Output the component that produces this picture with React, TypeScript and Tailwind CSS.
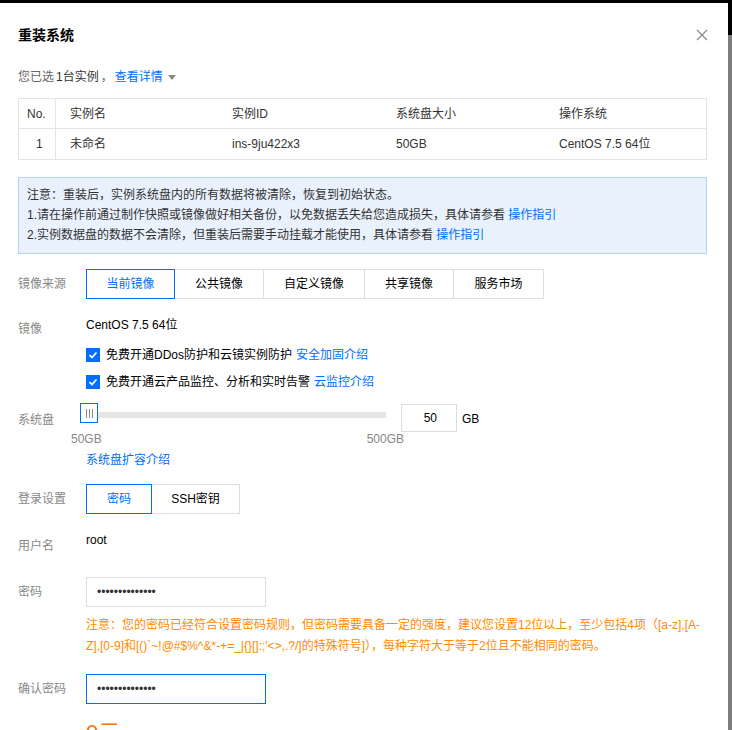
import React from "react";

const font = { fontFamily: '"Liberation Sans", "Noto Sans CJK SC", sans-serif' };

function Label({ children, className = "" }: { children: React.ReactNode; className?: string }) {
  return <div className={`w-[68px] shrink-0 text-[12px] text-[#888] ${className}`}>{children}</div>;
}

function Check() {
  return (
    <span className="flex h-[14px] w-[14px] items-center justify-center bg-[#006eff]">
      <svg width="10" height="10" viewBox="0 0 10 10">
        <path d="M1.5 5.2 L4 7.5 L8.5 2.5" fill="none" stroke="white" strokeWidth="1.8" />
      </svg>
    </span>
  );
}

const warning =
  "注意：您的密码已经符合设置密码规则，但密码需要具备一定的强度，建议您设置12位以上，至少包括4项（[a-z],[A-Z],[0-9]和[()`~!@#$%^&*-+=_|{}[]:;'<>,.?/]的特殊符号]），每种字符大于等于2位且不能相同的密码。";

export default function App() {
  const sources = [
    { name: "当前镜像", w: "w-[89px]" },
    { name: "公共镜像", w: "w-[89px]" },
    { name: "自定义镜像", w: "w-[101px]" },
    { name: "共享镜像", w: "w-[89px]" },
    { name: "服务市场", w: "w-[90px]" },
  ];
  const cols = [
    { h: "实例名", v: "未命名", w: "w-[162px]" },
    { h: "实例ID", v: "ins-9ju422x3", w: "w-[164px]" },
    { h: "系统盘大小", v: "50GB", w: "w-[163px]" },
    { h: "操作系统", v: "CentOS 7.5 64位", w: "flex-1" },
  ];

  return (
    <div className="flex h-[730px] w-[732px] overflow-hidden bg-black" style={font}>
      <div className="mt-[3px] flex w-[728px] flex-col bg-white pl-[18px] pr-[21px] text-[12px] text-[#333]">
        {/* header */}
        <div className="mt-[22px] flex h-[20px] items-center justify-between">
          <h1 className="text-[14px] font-bold text-black">重装系统</h1>
          <svg width="12" height="12" viewBox="0 0 12 12" className="mr-[-1px]">
            <path d="M1 1 L11 11 M11 1 L1 11" stroke="#888" strokeWidth="1.2" />
          </svg>
        </div>

        <div className="mt-[23px] flex h-[18px] items-center text-[#666]">
          您已选 <span className="mx-[2px] text-[#333]">1台实例</span>，
          <span className="ml-[2px] text-[#006eff]">查看详情</span>
          <svg width="8" height="5" viewBox="0 0 8 5" className="ml-[5px]">
            <path d="M0 0 H8 L4 5 Z" fill="#888" />
          </svg>
        </div>

        {/* table */}
        <div className="mt-[12px] border border-[#e5e5e5]">
          <div className="flex h-[30px] items-center border-b border-[#e5e5e5]">
            <div className="flex h-full w-[37px] items-center border-r border-[#e5e5e5] pl-[8px]">No.</div>
            {cols.map((c) => (
              <div key={c.h} className={`${c.w} pl-[14px]`}>{c.h}</div>
            ))}
          </div>
          <div className="flex h-[30px] items-center">
            <div className="flex h-full w-[37px] items-center border-r border-[#e5e5e5] pl-[17px]">1</div>
            {cols.map((c) => (
              <div key={c.h} className={`${c.w} pl-[14px]`}>{c.v}</div>
            ))}
          </div>
        </div>

        {/* notice */}
        <div className="mt-[17px] border border-[#b4d3f5] bg-[#e8f1fc] pb-[8px] pl-[8px] pt-[7px] leading-[20px] text-[#333]">
          <p>注意：重装后，实例系统盘内的所有数据将被清除，恢复到初始状态。</p>
          <p>
            1.请在操作前通过制作快照或镜像做好相关备份，以免数据丢失给您造成损失，具体请参看{" "}
            <span className="text-[#006eff]">操作指引</span>
          </p>
          <p>
            2.实例数据盘的数据不会清除，但重装后需要手动挂载才能使用，具体请参看{" "}
            <span className="text-[#006eff]">操作指引</span>
          </p>
        </div>

        {/* image source */}
        <div className="mt-[15px] flex items-center">
          <Label>镜像来源</Label>
          <div className="flex h-[30px]">
            {sources.map((s, i) => (
              <div
                key={s.name}
                className={`${s.w} flex items-center justify-center ${
                  i === 0
                    ? "border border-[#006eff] text-[#006eff]"
                    : "border-y border-r border-[#ddd] text-black"
                }`}
              >
                {s.name}
              </div>
            ))}
          </div>
        </div>

        {/* image */}
        <div className="mt-[17px] flex">
          <Label className="mt-[4px]">镜像</Label>
          <div className="flex flex-col">
            <div className="h-[18px] leading-[18px] text-black">CentOS 7.5 64位</div>
            <div className="mt-[13px] flex h-[16px] items-center">
              <Check />
              <span className="ml-[6px] text-black">免费开通DDos防护和云镜实例防护</span>
              <span className="ml-[4px] text-[#006eff]">安全加固介绍</span>
            </div>
            <div className="mt-[11px] flex h-[16px] items-center">
              <Check />
              <span className="ml-[6px] text-black">免费开通云产品监控、分析和实时告警</span>
              <span className="ml-[4px] text-[#006eff]">云监控介绍</span>
            </div>
          </div>
        </div>

        {/* system disk */}
        <div className="mt-[13px] flex">
          <Label className="mt-[8px]">系统盘</Label>
          <div className="flex flex-col">
            <div className="ml-[-6px] flex items-start">
              <div className="flex items-center">
                <div className="flex h-[20px] w-[18px] items-center justify-center gap-[2px] border border-[#006eff] bg-white">
                  <span className="h-[9px] w-px bg-[#888]" />
                  <span className="h-[9px] w-px bg-[#888]" />
                  <span className="h-[9px] w-px bg-[#888]" />
                </div>
                <div className="mt-[4px] h-[6px] w-[288px] bg-[#e5e5e5]" />
              </div>
              <div className="ml-[15px] mt-[1px] flex h-[28px] w-[56px] items-center justify-end border border-[#ddd] pr-[19px] text-black">
                50
              </div>
              <span className="ml-[5px] mt-[7px] text-black">GB</span>
            </div>
            <div className="ml-[-15px] mt-[-2px] flex w-[333px] justify-between text-[#888]">
              <span>50GB</span>
              <span>500GB</span>
            </div>
            <div className="mt-[3px] text-[#006eff]">系统盘扩容介绍</div>
          </div>
        </div>

        {/* login */}
        <div className="mt-[15px] flex items-center">
          <Label>登录设置</Label>
          <div className="flex h-[30px]">
            <div className="flex w-[66px] items-center justify-center border border-[#006eff] text-[#006eff]">密码</div>
            <div className="flex w-[88px] items-center justify-center border border-l-0 border-[#ddd] text-black">SSH密钥</div>
          </div>
        </div>

        <div className="mt-[17px] flex">
          <Label className="mt-[6px]">用户名</Label>
          <div className="text-black">root</div>
        </div>

        <div className="mt-[22px] flex items-center">
          <Label>密码</Label>
          <div className="flex h-[30px] w-[180px] items-center border border-[#ddd] pl-[10px] text-[12px] text-[#333]">
            ••••••••••••••
          </div>
        </div>

        <div className="ml-[68px] mt-[8px] leading-[21px] text-[#ff8a00]">{warning}</div>

        <div className="mt-[17px] flex items-center">
          <Label>确认密码</Label>
          <div className="flex h-[30px] w-[180px] items-center border border-[#006eff] pl-[10px] text-[12px] text-[#333]">
            ••••••••••••••
          </div>
        </div>

        <div className="ml-[68px] mt-[15px] text-[22px] leading-[28px] text-[#ff7200]">0元</div>
      </div>
      <div className="flex w-[4px] flex-col">
        <div className="h-[35px] bg-black" />
        <div className="flex-1 bg-[#7d7d7d]" />
      </div>
    </div>
  );
}
